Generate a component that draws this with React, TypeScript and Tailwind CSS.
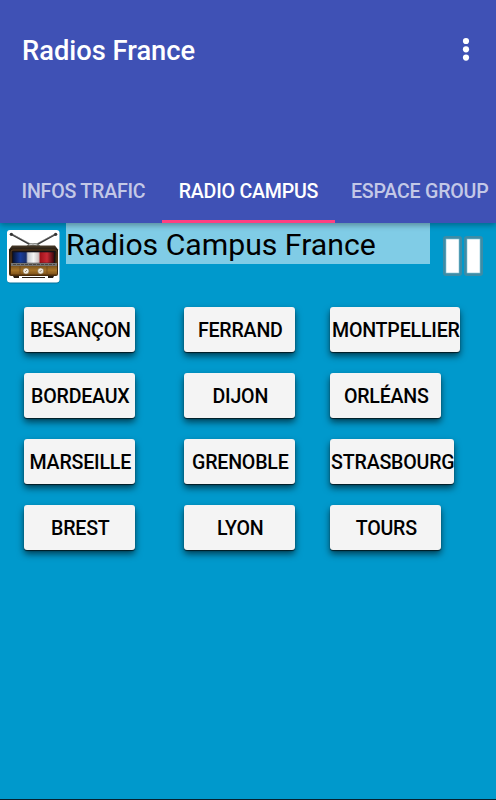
const columns = [
    ["BESANÇON", "BORDEAUX", "MARSEILLE", "BREST"],
    ["FERRAND", "DIJON", "GRENOBLE", "LYON"],
    ["MONTPELLIER", "ORLÉANS", "STRASBOURG", "TOURS"],
];

// stations whose name is wider than a standard button
const wide: Record<string, string> = {
    MONTPELLIER: "w-[130px]",
    STRASBOURG: "w-[124px]",
};

const RadioLogo = () => {
    return (
        <svg viewBox="0 0 54 54" className="w-[54px] h-[54px] shrink-0">
            <defs>
                <linearGradient id="wood" x1="0" x2="0" y1="0" y2="1">
                    <stop offset="0" stopColor="#4a3c2a" />
                    <stop offset="0.15" stopColor="#1f160d" />
                    <stop offset="0.6" stopColor="#3d2509" />
                    <stop offset="1" stopColor="#4c2c0b" />
                </linearGradient>
                <linearGradient id="panel" x1="0" x2="0" y1="0" y2="1">
                    <stop offset="0" stopColor="#7b5520" />
                    <stop offset="0.5" stopColor="#a87428" />
                    <stop offset="1" stopColor="#80531b" />
                </linearGradient>
                <linearGradient id="flag" x1="0" x2="1" y1="0" y2="0">
                    <stop offset="0" stopColor="#081333" />
                    <stop offset="0.18" stopColor="#193d9b" />
                    <stop offset="0.32" stopColor="#182e6b" />
                    <stop offset="0.36" stopColor="#c5c8ce" />
                    <stop offset="0.5" stopColor="#f4f4f4" />
                    <stop offset="0.62" stopColor="#cfc6c6" />
                    <stop offset="0.67" stopColor="#a1131b" />
                    <stop offset="0.83" stopColor="#c92a35" />
                    <stop offset="1" stopColor="#3b080c" />
                </linearGradient>
            </defs>
            <rect x="0.5" y="1" width="52" height="52.5" rx="3" fill="#08729a" />
            <rect x="0" y="0" width="52.5" height="52.5" rx="3" fill="#fff" />
            <path d="M4 4 24 15M49 4 29 15" stroke="#373737" strokeWidth="1.9" />
            <path d="M5 4 24 14M48 4 29 14" stroke="#a5a5a5" strokeWidth="0.5" />
            <circle cx="4.3" cy="4.3" r="1.6" fill="#343434" />
            <circle cx="48.7" cy="4.3" r="1.6" fill="#343434" />
            <path d="M19 17q2-4 7.500-4t7.500 4z" fill="#71756f" />
            <path d="M22 15q4-2 8 0" stroke="#d2d2d2" fill="none" />
            <path d="M6 46h6v2H7zM41 46h6l-1 2h-5zM15 47h23v1H15z" fill="#261b12" />
            <path d="M5 15.500h43l3 4V44q0 2-2 2H4q-2 0-2-2V19.500z" fill="url(#wood)" />
            <rect x="5" y="21" width="43" height="13" fill="#161216" />
            <path d="M4 34V22q0-2 2-2h42q2 0 2 2v12" fill="none" stroke="#6c4520" strokeWidth="0.8" />
            <rect x="6" y="22.3" width="41" height="10.500" fill="url(#flag)" />
            <rect x="4" y="33" width="46" height="3" fill="#747473" />
            <path d="M6 34.500h42" stroke="#39302a" strokeDasharray="3 1" strokeWidth="0.7" />
            <rect x="4" y="36" width="46" height="8.500" fill="url(#panel)" />
            <path d="M13 36v9M40 36v9" stroke="#69441b" strokeWidth="0.7" />
            <circle cx="19" cy="41" r="3.100" fill="#f1eadf" stroke="#766039" strokeWidth="0.6" />
            <circle cx="33.7" cy="41" r="3.100" fill="#f1eadf" stroke="#766039" strokeWidth="0.6" />
            <path d="m18 42 2-2M32.700 42l2-2" stroke="#9e8f78" />
        </svg>
    );
};

const PauseIcon = () => {
    return (
        <svg viewBox="0 0 40 42" className="w-10 h-[42px]">
            <g fill="#3d8ca6">
                <rect x="0" y="0" width="19" height="40" rx="3" />
                <rect x="21" y="0" width="19" height="40" rx="3" />
            </g>
            <g fill="#fff" stroke="#82c3d8" strokeWidth="0.6">
                <rect x="3" y="3" width="13" height="34" />
                <rect x="24" y="3" width="13" height="34" />
            </g>
        </svg>
    );
};

const App = () => {
    return (
        <div className="w-full h-screen flex flex-col overflow-hidden bg-[#0099cc] border-b border-b-[#06202d] font-[Roboto,sans-serif]">
            <header className="h-[223px] shrink-0 relative z-10 flex flex-col justify-between bg-[#3f51b5] text-white shadow-[0_2px_6px_rgba(0,0,0,0.35)]">
                <div className="h-[102px] pl-[22px] pr-[26px] flex items-center justify-between">
                    <h1 className="text-[27.300px] leading-8 font-medium whitespace-nowrap">Radios France</h1>
                    <svg viewBox="0 0 8 24" className="w-2 h-6 -mt-1" fill="#fff">
                        <circle cx="4" cy="4" r="3.100" />
                        <circle cx="4" cy="12.300" r="3.100" />
                        <circle cx="4" cy="20.600" r="3.100" />
                    </svg>
                </div>
                <nav className="h-[66px] flex text-[19.600px] tracking-[-0.22px] font-medium whitespace-nowrap">
                    <button className="w-[162px] pl-[5px] pt-1 shrink-0 text-white/70">INFOS TRAFIC</button>
                    <button className="w-[173px] shrink-0 border-b-3 border-b-[#ff4081] pt-[7px]">RADIO CAMPUS</button>
                    <button className="pl-4 pt-1 shrink-0 text-white/70">ESPACE GROUP</button>
                </nav>
            </header>
            <main className="flex flex-col">
                <div className="h-[84px] pl-[7px] pr-[13px] flex items-start">
                    <div className="mt-[7px]">
                        <RadioLogo />
                    </div>
                    <h2 className="ml-[5px] w-[364px] h-[41px] pt-0.5 bg-[#80cce6] text-[30.200px] leading-10 text-black whitespace-nowrap">
                        Radios Campus France
                    </h2>
                    <button aria-label="Pause" className="ml-[13px] mt-[13px]">
                        <PauseIcon />
                    </button>
                </div>
                <div className="pl-[24.300px] pt-[0.300px] grid grid-cols-[160px_146px_130px] text-[19.600px] tracking-[-0.2px] font-medium text-black">
                    {columns.map((stations) => (
                        <div key={stations[0]} className="flex flex-col gap-[21px]">
                            {stations.map((name) => (
                                <button
                                    key={name}
                                    className={`${wide[name] ?? "w-[111px]"} h-[45px] pt-0.5 pl-px flex items-center justify-center rounded-[3px] bg-[#f4f4f4] whitespace-nowrap shadow-[0_1px_1px_rgba(0,0,0,0.65),0_4px_7px_rgba(0,0,0,0.6)]`}
                                >
                                    {name}
                                </button>
                            ))}
                        </div>
                    ))}
                </div>
            </main>
        </div>
    );
};

export default App;
